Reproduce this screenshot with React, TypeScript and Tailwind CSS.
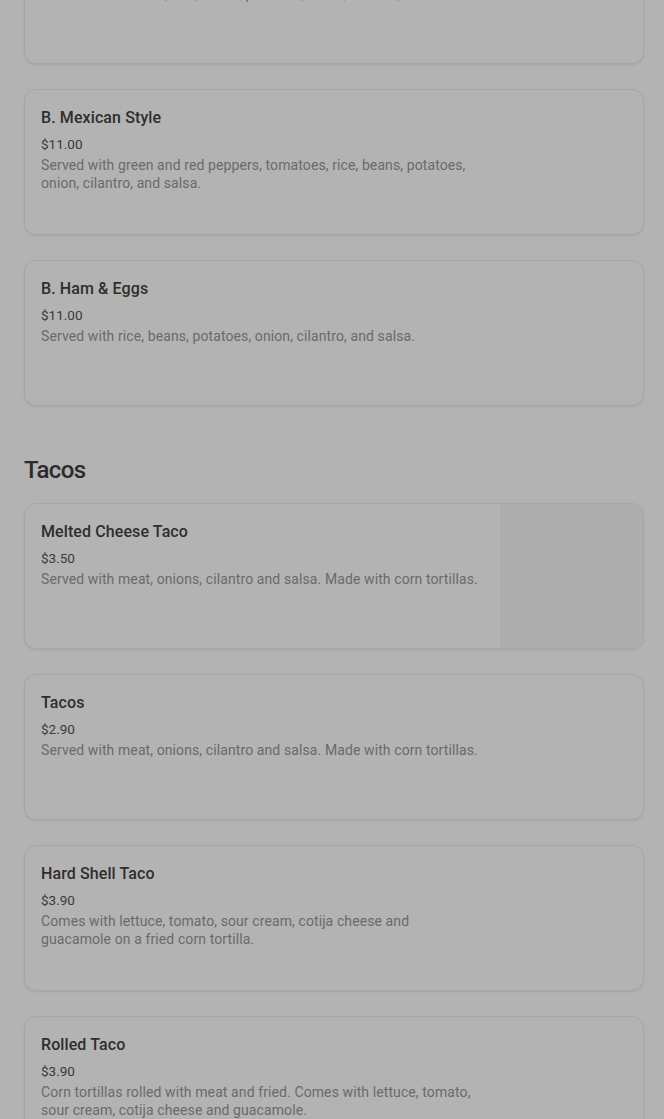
import React from "react";

type Item = { name: string; price: string; desc: string; image?: boolean };

function Card({ item, className = "" }: { item: Item; className?: string }) {
  return (
    <div
      className={`flex h-[146px] overflow-hidden rounded-[12px] border border-[#a7a7a7] bg-[#b3b3b3] shadow-[0_1px_2px_rgba(0,0,0,0.08)] ${className}`}
    >
      <div className="flex w-[475px] shrink-0 flex-col pl-4 pt-[16px]">
        <div className="text-[16px] leading-[24px] font-medium tracking-[0.1px] text-[#2e2e2e]">{item.name}</div>
        <div className="mt-[4px] text-[13.5px] leading-[20px] text-[#3a3a3a]">{item.price}</div>
        <div className="mt-[2px] w-[438px] text-[14px] leading-[18px] tracking-[0.1px] text-[#6a6a6a]">{item.desc}</div>
      </div>
      {item.image ? <div className="flex-1 bg-[#adadad]" /> : <div className="flex-1" />}
    </div>
  );
}

export default function App() {
  const top: Item[] = [
    { name: "B. Mexican Style", price: "$11.00", desc: "Served with green and red peppers, tomatoes, rice, beans, potatoes, onion, cilantro, and salsa." },
    { name: "B. Ham & Eggs", price: "$11.00", desc: "Served with rice, beans, potatoes, onion, cilantro, and salsa." },
  ];
  const tacos: Item[] = [
    { name: "Melted Cheese Taco", price: "$3.50", desc: "Served with meat, onions, cilantro and salsa. Made with corn tortillas.", image: true },
    { name: "Tacos", price: "$2.90", desc: "Served with meat, onions, cilantro and salsa. Made with corn tortillas." },
    { name: "Hard Shell Taco", price: "$3.90", desc: "Comes with lettuce, tomato, sour cream, cotija cheese and guacamole on a fried corn tortilla." },
    { name: "Rolled Taco", price: "$3.90", desc: "Corn tortillas rolled with meat and fried. Comes with lettuce, tomato, sour cream, cotija cheese and guacamole." },
  ];
  return (
    <div
      className="h-[1119px] overflow-hidden bg-[#b3b3b3] pl-6 pr-5"
      style={{ fontFamily: "Roboto, 'Liberation Sans', sans-serif" }}
    >
      <div className="-mt-[82px] flex flex-col gap-[25px]">
        <Card item={{ name: "B. Chorizo & Eggs", price: "$11.00", desc: "Served with chorizo, rice, beans, potatoes, onion, cilantro, and salsa." }} />
        {top.map((it) => (
          <Card key={it.name} item={it} />
        ))}
      </div>
      <h2 className="mt-[48px] mb-[17px] text-[24px] leading-[32px] font-medium tracking-[-0.6px] text-[#2b2b2b]">
        Tacos
      </h2>
      <div className="flex flex-col gap-[25px]">
        {tacos.map((it) => (
          <Card key={it.name} item={it} />
        ))}
      </div>
    </div>
  );
}
